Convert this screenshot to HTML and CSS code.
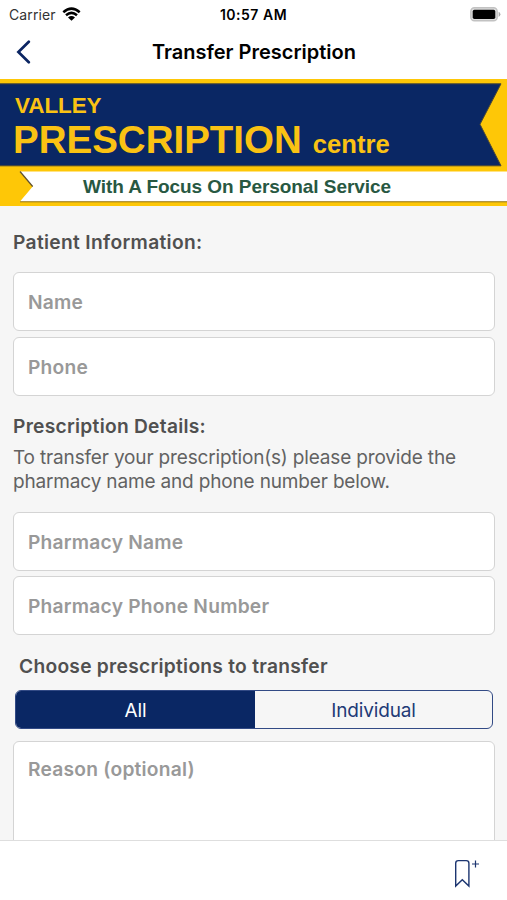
FILE: index.html
```html
<!DOCTYPE html>
<html lang="en">
<head>
<meta charset="utf-8">
<title>Transfer Prescription</title>
<link rel="stylesheet" href="styles.css">
</head>
<body>
<div class="app">
  <div class="status">
    <div class="carrier"><span>Carrier</span>
      <svg width="19" height="15" viewBox="0 0 19 15" fill="none" stroke="#000"><path d="M1.3 5.2Q9.5-2 17.7 5.2M4 8.3Q9.5 3.5 15 8.3" stroke-width="2.5"/><path d="M9.5 13.8 6 10.4Q9.5 7.6 13 10.4Z" fill="#000" stroke="none"/></svg>
    </div>
    <div class="time">10:57 AM</div>
    <svg class="battery" width="31" height="15" viewBox="0 0 31 15"><rect x=".8" y=".8" width="26.4" height="13" rx="3.6" fill="#ddd" stroke="#c2c2c2" stroke-width="1.4"/><rect x="2.7" y="2.7" width="22.6" height="9.2" rx="1.7" fill="#000"/><path d="M28.6 4.7Q30.4 5.5 30.4 7.3T28.6 9.9Z" fill="#aaa"/></svg>
  </div>
  <header class="nav">
    <svg class="back" width="16" height="24" viewBox="0 0 16 24" fill="none" stroke="#0b2563" stroke-width="2.7" stroke-linecap="round"><path d="M13.8 1.8 3.4 12 13.8 22.2"/></svg>
    <h1>Transfer Prescription</h1>
  </header>
  <div class="banner">
    <svg class="ribbons" width="507" height="127" viewBox="0 0 507 127"><path d="M-2 4.8H501L480 45.3 501 86.8H-2Z" fill="#0a2764" stroke="#4c4936" stroke-width="1"/><path d="M20 92.5H507V122.6H20L32.7 107.5Z" fill="#fff"/><path d="m20 92.5 12.7 15" stroke="#5e5030" stroke-width="1.2"/><path d="M20 122.8H507" stroke="#927522" stroke-width="1"/></svg>
    <div class="brand">
      <div class="valley">VALLEY</div>
      <div class="name"><span class="big">PRESCRIPTION</span><span class="centre">centre</span></div>
    </div>
    <div class="tagline">With A Focus On Personal Service</div>
  </div>
  <main>
    <h2 class="patient">Patient Information:</h2>
    <div class="field">Name</div>
    <div class="field">Phone</div>
    <h2 class="details">Prescription Details:</h2>
    <p>To transfer your prescription(s) please provide the<br>pharmacy name and phone number below.</p>
    <div class="field">Pharmacy Name</div>
    <div class="field">Pharmacy Phone Number</div>
    <h2 class="choose">Choose prescriptions to transfer</h2>
    <div class="segments"><div class="segment active">All</div><div class="segment">Individual</div></div>
    <div class="field reason">Reason (optional)</div>
  </main>
  <footer>
    <svg width="26" height="29" viewBox="0 0 26 29" fill="none" stroke="#1c3570" stroke-width="1.4"><path d="M1.7 27V4.2Q1.7 1.6 4.3 1.6H12.3Q14.9 1.6 14.9 4.2V27L8.3 20.7Z"/><path d="M18 5H25M21.5 1.6V8.4" stroke-width="1.2"/></svg>
  </footer>
</div>
</body>
</html>
```
FILE: styles.css
```css
* { box-sizing: border-box; }
body { margin: 0; font-family: Inter, "Liberation Sans", sans-serif; background: #fff; }
.app { width: 507px; height: 900px; display: flex; flex-direction: column; overflow: hidden; }
svg { display: block; flex: none; }
h1, h2, p { margin: 0; }
.status { height: 28px; flex: none; display: grid; grid-template-columns: 1fr auto 1fr; align-items: center; padding: 0 6px 0 9px; font-size: 14px; }
.carrier { display: flex; align-items: center; gap: 6px; color: #333; letter-spacing: .1px; }
.time { font-weight: 600; font-size: 14px; letter-spacing: .5px; margin-right: 3px; }
.battery { justify-self: end; }
.nav { height: 51px; flex: none; display: grid; grid-template-columns: 40px 1fr 40px; align-items: center; padding: 0 0 4px 15px; }
.nav h1 { font-size: 20px; line-height: 26px; font-weight: 600; text-align: center; padding-right: 14px; white-space: nowrap; }
.banner { position: relative; height: 127px; flex: none; background: #fec707; font-family: "Liberation Sans", Arial, sans-serif; font-weight: 700; white-space: nowrap; }
.ribbons { position: absolute; inset: 0; }
.brand { position: relative; height: 92px; padding: 14px 0 0 15px; color: #fac213; }
.valley { font-size: 22.5px; line-height: 26px; letter-spacing: -.1px; }
.name { display: flex; align-items: baseline; gap: 11px; line-height: 41px; margin-left: -2px; }
.big { font-size: 38.5px; }
.centre { font-size: 25.6px; }
.tagline { position: relative; padding-left: 83px; font-size: 19px; line-height: 31px; letter-spacing: -.06px; color: #285842; }
main { flex: 1; min-height: 0; overflow: hidden; background: #f6f6f6; padding: 24px 12px 0 13px; white-space: nowrap; }
h2 { font-size: 19.2px; line-height: 24px; font-weight: 600; letter-spacing: .27px; color: #505050; }
.patient { margin-bottom: 18px; letter-spacing: .33px; }
.field { height: 59px; border: 1.5px solid #d4d4d4; border-radius: 6px; background: #fff; padding: 1px 14px 0; display: flex; align-items: center; color: #999; font-size: 19.2px; font-weight: 600; letter-spacing: .23px; margin-bottom: 5.7px; }
.details { margin-top: 18px; }
p { font-size: 19px; line-height: 24.5px; letter-spacing: -.16px; color: #626262; margin: 8px 0 17px; }
.choose { margin: 19px 0 12px 6px; }
.segments { display: flex; width: 478px; height: 39px; margin: 0 0 12px 2px; border: 1.3px solid #324a85; border-radius: 6px; overflow: hidden; }
.segment { flex: 0 0 239px; display: flex; align-items: center; justify-content: center; font-size: 19px; letter-spacing: -.15px; color: #223a76; padding-top: 1px; }
.segment:last-child { flex: 1; }
.active { background: #0a2764; color: #fff; }
.reason { height: 180px; align-items: flex-start; padding-top: 15px; }
footer { height: 60px; flex: none; border-top: 1px solid #dedede; background: #fff; display: flex; justify-content: flex-end; padding: 18px 27px 0 0; }
```
